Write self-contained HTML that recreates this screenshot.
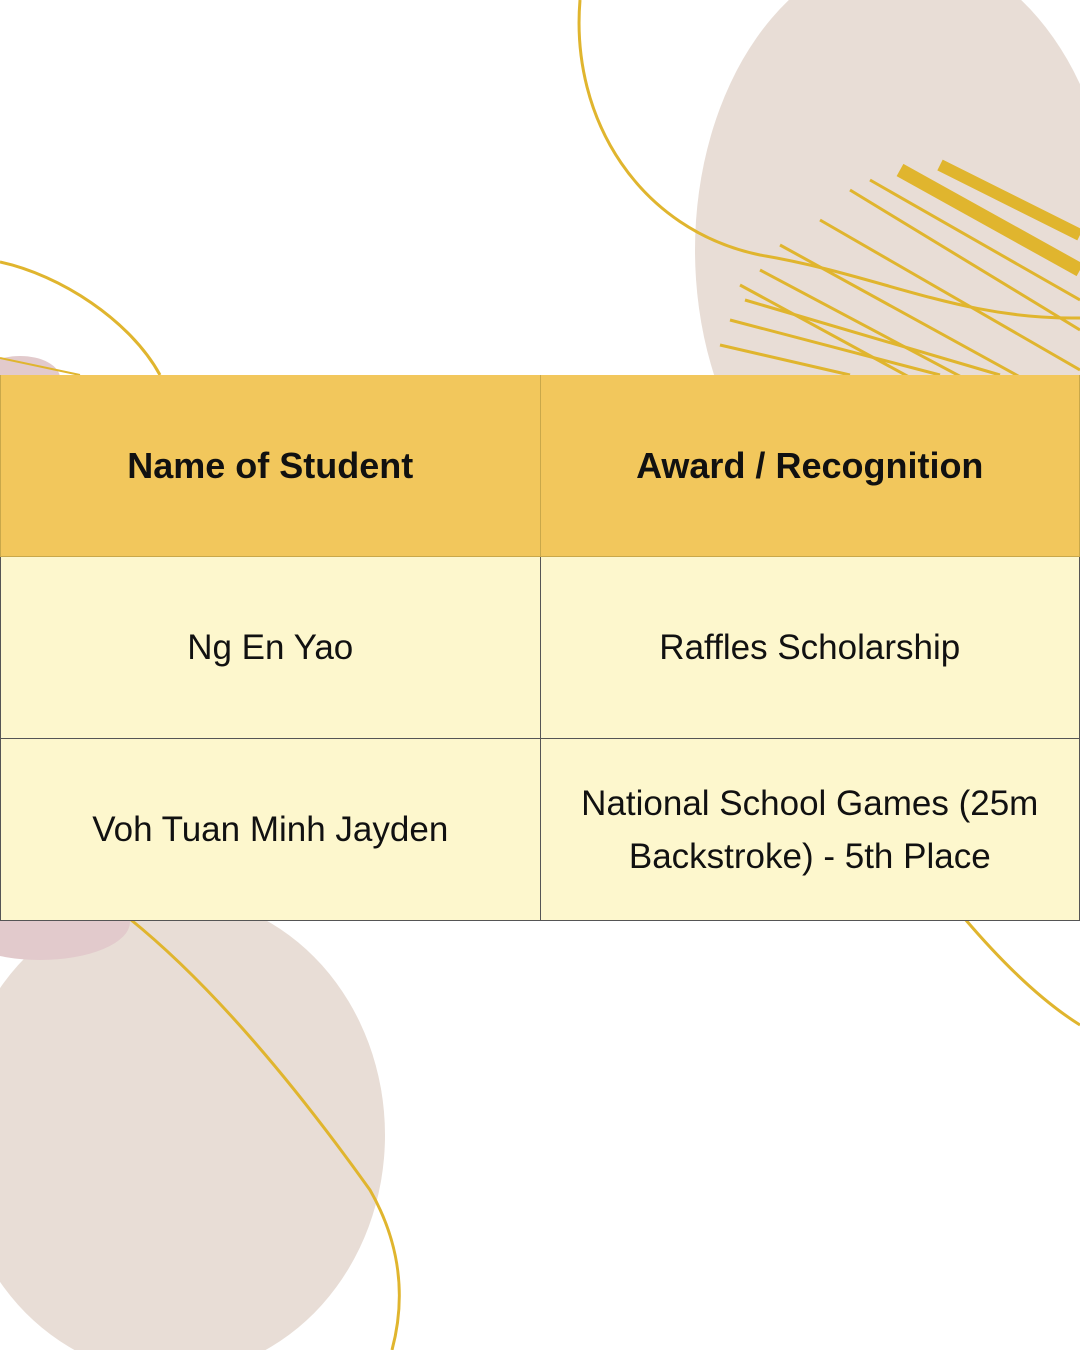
<!DOCTYPE html>
<html><head><meta charset="utf-8"><style>
body{margin:0;width:1080px;height:1350px;position:relative;overflow:hidden;background:#fff;font-family:"Liberation Sans",sans-serif}
svg{position:absolute;left:0;top:0}
table{position:absolute;left:0;top:375px;width:1080px;border-collapse:collapse;table-layout:fixed}
td{border:1px solid #555;text-align:center;vertical-align:middle;color:#111;font-size:35px;line-height:53px;padding:0 18px}
tr.h td{background:#F2C75C;height:181px;font-weight:bold;font-size:36px;border-color:#c9a84a;border-top:none}
tr.r td{background:#FDF7CD;height:181px}
</style></head><body>
<svg width="1080" height="1350">
<ellipse cx="905" cy="250" rx="210" ry="300" fill="#E8DDD6"/>
<ellipse cx="170" cy="1135" rx="215" ry="240" fill="#E8DDD6"/>
<ellipse cx="20" cy="378" rx="40" ry="22" fill="#E2CACC"/>
<ellipse cx="40" cy="922" rx="90" ry="38" fill="#E2CACC"/>
<g stroke="#E0B52E" fill="none">
<path d="M580,0 C570,120 640,230 760,255 C880,275 960,320 1080,318" stroke-width="3"/>
<path d="M0,262 C60,275 130,320 160,375" stroke-width="3"/>
<path d="M130,919 C230,1000 320,1120 370,1190 C410,1260 400,1320 392,1350" stroke-width="3"/>
<path d="M965,919 C1000,960 1040,1000 1080,1025" stroke-width="3"/>
<g stroke-width="3">
<path d="M740,285 L1080,470"/><path d="M760,270 L1080,440"/><path d="M780,245 L1080,410"/>
<path d="M820,220 L1080,370"/><path d="M850,190 L1080,330"/><path d="M870,180 L1080,300"/>
<path d="M730,320 L940,375"/><path d="M745,300 L1000,375"/><path d="M720,345 L850,375"/>
</g>
<path d="M900,170 L1080,270" stroke-width="14"/><path d="M940,165 L1080,235" stroke-width="12"/>
<path d="M0,358 L80,375" stroke-width="2"/>
</g>
</svg>
<table>
<tr class="h"><td>Name of Student</td><td>Award / Recognition</td></tr>
<tr class="r"><td>Ng En Yao</td><td>Raffles Scholarship</td></tr>
<tr class="r"><td>Voh Tuan Minh Jayden</td><td>National School Games (25m Backstroke) - 5th Place</td></tr>
</table>
</body></html>
